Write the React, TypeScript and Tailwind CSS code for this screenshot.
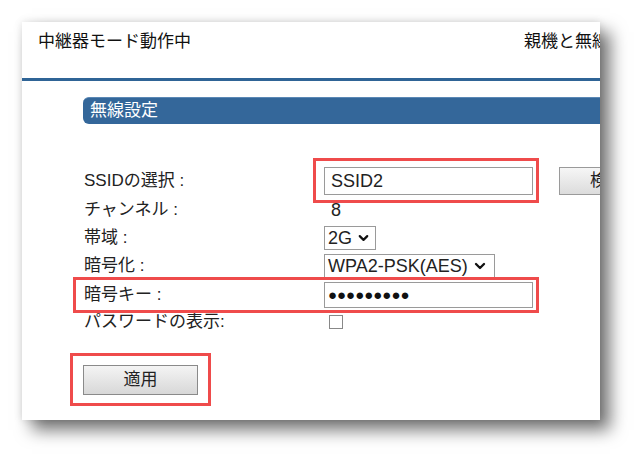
import { ChevronDown } from 'lucide-react'

const font = 'font-[Liberation_Sans,Noto_Sans_CJK_JP,sans-serif]'

function Row({ label, h, children }: { label: string; h: string; children: React.ReactNode }) {
  return (
    <div className={`flex items-center ${h}`}>
      <span className="w-[240px] shrink-0 text-[17px] leading-[20px] text-[#222]">{label}</span>
      {children}
    </div>
  )
}

function FakeSelect({ value, w }: { value: string; w: string }) {
  return (
    <div className={`flex items-center h-[24px] ${w} border border-[#9a9a9a] bg-white pl-[3px] pr-[4px] shrink-0`}>
      <span className="text-[18px] leading-[20px] text-[#222] whitespace-nowrap">{value}</span>
      <ChevronDown className="w-[16px] h-[16px] ml-[4px] text-[#111]" strokeWidth={3.5} />
    </div>
  )
}

export default function App() {
  return (
    <div className={`relative w-[642px] h-[463px] bg-white overflow-hidden ${font}`}>
      <div className="absolute left-[22px] top-[22px] w-[578px] h-[398px] bg-white overflow-hidden shadow-[10px_10px_16px_rgba(0,0,0,0.55),0_0_8px_rgba(0,0,0,0.12)]">
        <div className="flex h-[56px] pt-[10px] pl-[16px]">
          <span className="w-[486px] shrink-0 text-[17px] leading-[20px] text-[#111]">中継器モード動作中</span>
          <span className="shrink-0 whitespace-nowrap text-[17px] leading-[20px] text-[#111]">親機と無線接続中</span>
        </div>
        <div className="h-[3px] bg-[#2f6496]" />

        <div className="mt-[16px] ml-[61px] w-[560px] h-[27px] flex items-center rounded-l-[6px] bg-[#34679a] border-t border-[#5b88b5] pl-[7px]">
          <span className="text-[17px] leading-[20px] text-white">無線設定</span>
        </div>

        <div className="mt-[42px] ml-[62px]">
          <Row label="SSIDの選択 :" h="h-[30px]">
            <div className="flex items-center h-[28px] w-[209px] shrink-0 border border-[#9a9a9a] bg-white px-[6px]">
              <span className="text-[18px] leading-[20px] text-[#222]">SSID2</span>
            </div>
            <div className="ml-[26px] shrink-0 flex items-center h-[28px] w-[90px] border border-[#9a9a9a] bg-gradient-to-b from-[#f6f6f6] to-[#dcdcdc] pl-[30px]">
              <span className="text-[17px] leading-[20px] text-[#222]">検索</span>
            </div>
          </Row>
          <Row label="チャンネル :" h="h-[28px]">
            <span className="pl-[7px] text-[18px] leading-[20px] text-[#222]">8</span>
          </Row>
          <Row label="帯域 :" h="h-[28px]">
            <FakeSelect value="2G" w="w-[52px]" />
          </Row>
          <Row label="暗号化 :" h="h-[28px]">
            <FakeSelect value="WPA2-PSK(AES)" w="w-[171px]" />
          </Row>
          <Row label="暗号キー :" h="h-[30px]">
            <div className="flex items-center h-[26px] w-[209px] shrink-0 border border-[#9a9a9a] bg-white px-[3px]">
              <span className="text-[15px] leading-[16px] text-[#111]">●●●●●●●●●</span>
            </div>
          </Row>
          <Row label="パスワードの表示:" h="h-[24px]">
            <div className="ml-[5px] w-[14px] h-[14px] border border-[#888] bg-white" />
          </Row>

          <div className="mt-[31px] -ml-[1px] w-[115px] h-[30px] flex items-center justify-center border border-[#8a8a8a] bg-gradient-to-b from-[#f4f4f4] to-[#d8d8d8]">
            <span className="text-[17px] leading-[20px] text-[#222]">適用</span>
          </div>
        </div>
      </div>

      <div className="absolute left-[313px] top-[158px] w-[226px] h-[45px] border-[3px] border-[#ef4b4b]" />
      <div className="absolute left-[73px] top-[277px] w-[466px] h-[36px] border-[3px] border-[#ef4b4b]" />
      <div className="absolute left-[70px] top-[353px] w-[141px] h-[53px] border-[3px] border-[#ef4b4b]" />
    </div>
  )
}
